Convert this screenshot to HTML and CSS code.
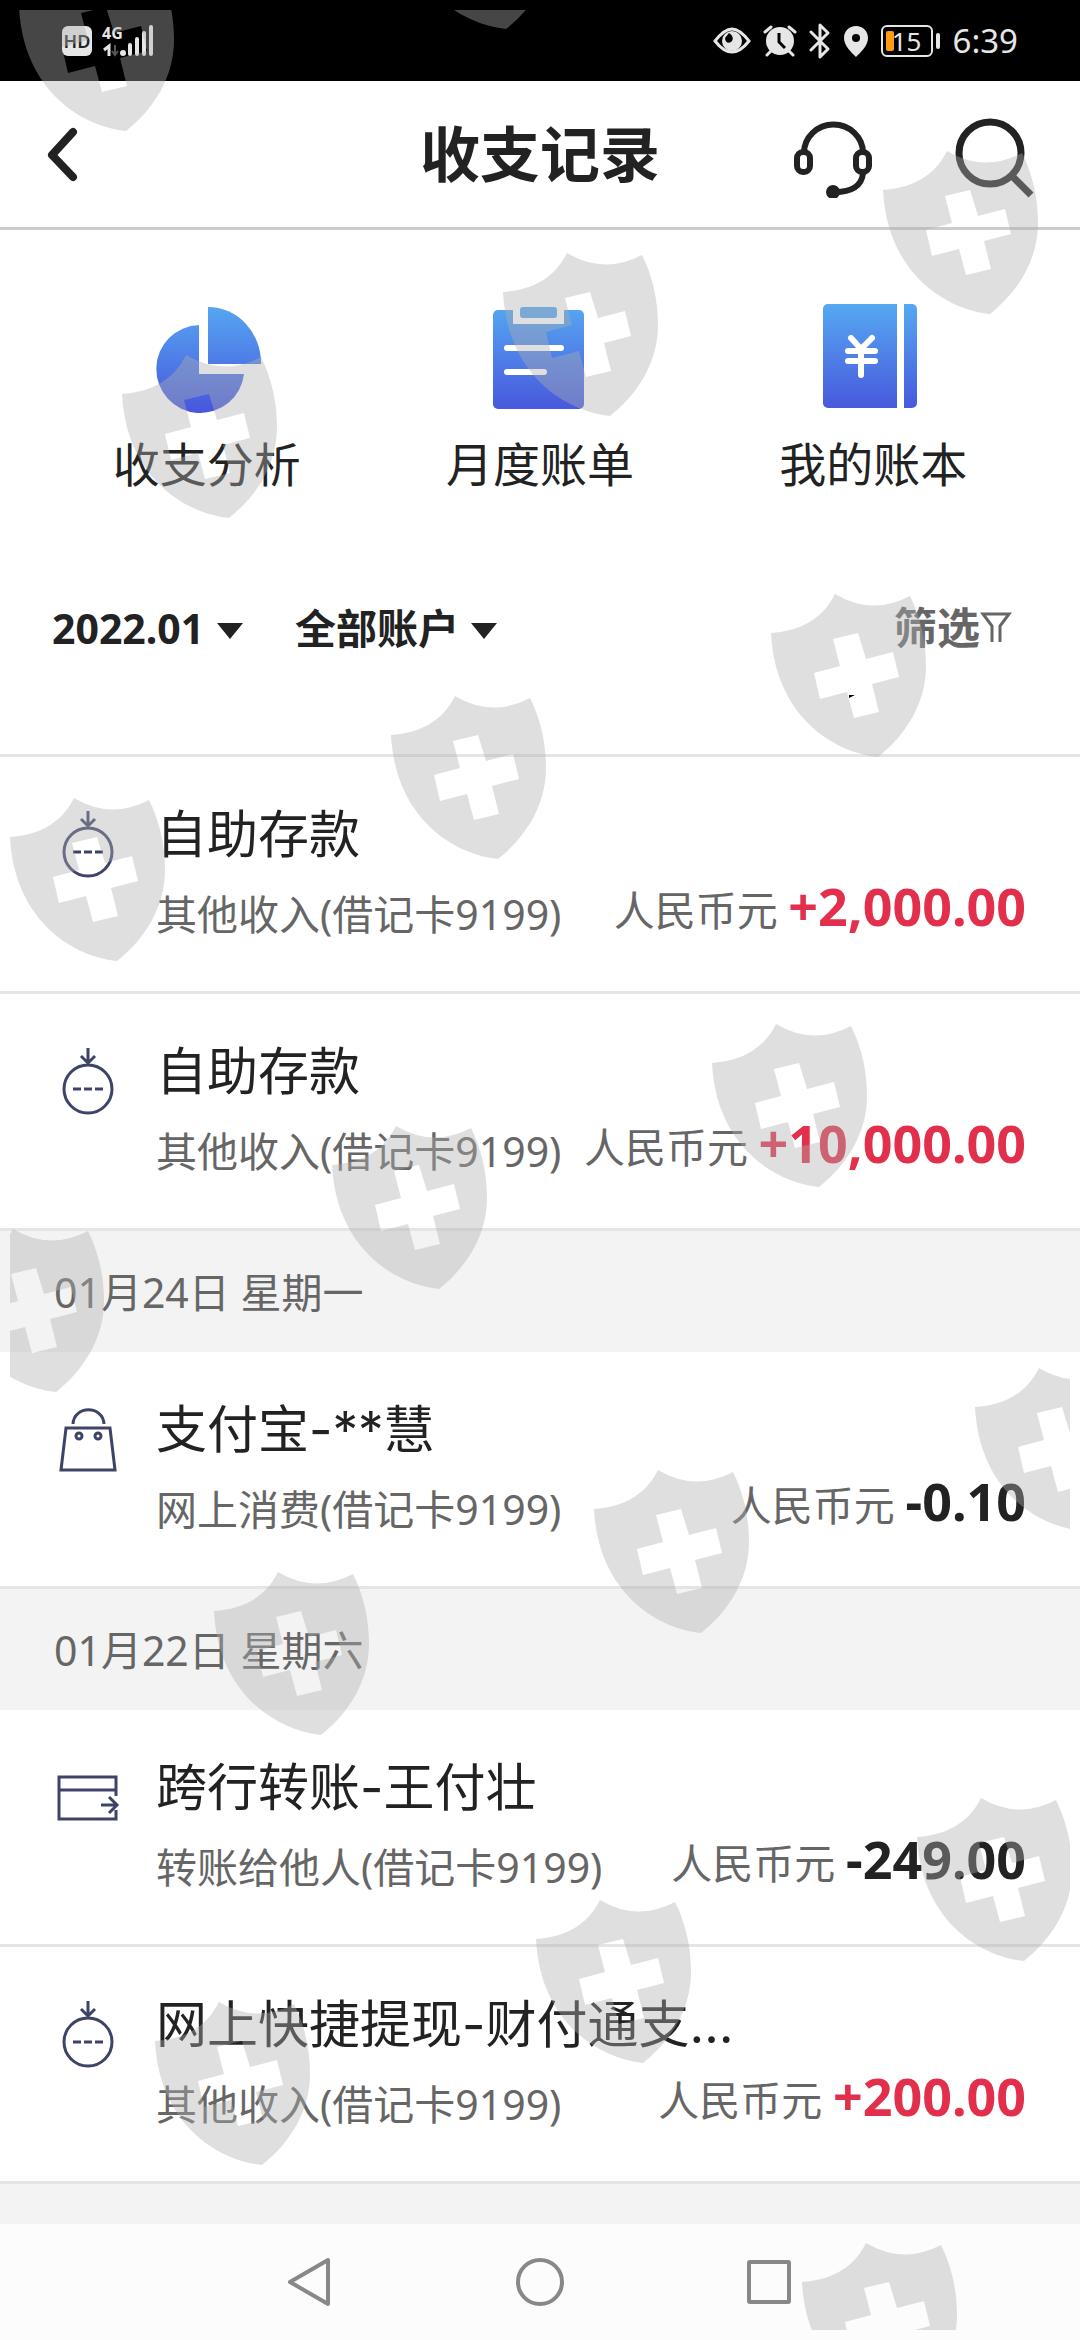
FILE: index.html
```html
<!DOCTYPE html>
<html lang="zh-CN">
<head>
  <meta charset="UTF-8">
  <meta name="viewport" content="width=device-width, initial-scale=1.0">
  <title>收支记录</title>
  <link rel="stylesheet" href="styles.css">
</head>
<body>

<div class="status-bar">
  <div class="status-group">
    <span class="hd-badge">HD</span>
    <span class="network">4G</span>
    <svg class="signal" width="50" height="32" viewBox="0 0 50 32">
      <path d="M1 25l5-4v10" fill="none" stroke="#e6e6e6" stroke-width="3"/>
      <path d="M12 20v10M9 26l3 4 3-4" fill="none" stroke="#555" stroke-width="2"/>
      <circle cx="20" cy="28" r="3" fill="#e6e6e6"/>
      <path d="M27 20v9M34 14v15M41 8v21M48 2v27" stroke="#e6e6e6" stroke-width="4" stroke-linecap="round"/>
    </svg>
  </div>
  <div class="status-group status-right">
    <svg width="38" height="34" viewBox="0 0 38 34">
      <path d="M2 17C9 8 14 5 19 5s10 3 17 12C29 26 24 28 19 28S9 26 2 17z" fill="none" stroke="#e6e6e6" stroke-width="3"/>
      <circle cx="19" cy="17" r="10" fill="#e6e6e6"/>
      <path d="M16 9c4 2 5 7 2 9-3 2-6 0-6-4z" fill="#000"/>
    </svg>
    <svg width="34" height="34" viewBox="0 0 34 34">
      <circle cx="17" cy="17" r="14" fill="#e6e6e6"/>
      <path d="M2 8l6-5M32 8l-6-5M4 31l4-4M30 31l-4-4" stroke="#e6e6e6" stroke-width="3" stroke-linecap="round"/>
      <path d="M16 9v9l6 6" fill="none" stroke="#000" stroke-width="3"/>
    </svg>
    <svg width="22" height="36" viewBox="0 0 22 36">
      <path d="M2 9l17 17-8 8V2l8 8L2 27" fill="none" stroke="#e6e6e6" stroke-width="3" stroke-linejoin="round" stroke-linecap="round"/>
    </svg>
    <svg width="26" height="34" viewBox="0 0 26 34">
      <path d="M13 2C6 2 1 7 1 14c0 8 8 15 12 19 4-4 12-11 12-19C25 7 20 2 13 2z" fill="#e6e6e6"/>
      <circle cx="13" cy="14" r="4" fill="#000"/>
    </svg>
    <span class="battery"><span class="battery-level"></span>15</span>
    <span class="clock">6:39</span>
  </div>
</div>

<header class="header">
  <button class="icon-button" aria-label="返回">
    <svg width="32" height="56" viewBox="0 0 32 56">
      <path d="M27 6L6 29l21 22" fill="none" stroke="#222" stroke-width="8" stroke-linecap="round" stroke-linejoin="round"/>
    </svg>
  </button>
  <h1>收支记录</h1>
  <div class="header-actions">
    <button class="icon-button" aria-label="客服">
      <svg width="80" height="88" viewBox="0 0 80 88" fill="none" stroke="#222" stroke-width="6">
        <path d="M10 43A29 28 0 0 1 69 43"/>
        <rect x="3" y="42" width="13" height="20" rx="6"/>
        <rect x="62" y="42" width="13" height="20" rx="6"/>
        <path d="M69 63C68 76 57 82 41 82"/>
        <circle cx="39" cy="82" r="7" fill="#222" stroke="none"/>
      </svg>
    </button>
    <button class="icon-button" aria-label="搜索">
      <svg width="80" height="88" viewBox="0 0 80 88" fill="none" stroke="#222" stroke-width="7">
        <circle cx="36" cy="43" r="31"/>
        <path d="M59 67l18 18"/>
      </svg>
    </button>
  </div>
</header>

<nav class="shortcuts">
  <a class="shortcut" href="#">
    <svg width="120" height="120" viewBox="0 0 120 120">
      <defs>
        <linearGradient id="blue" x1="0" y1="6" x2="0" y2="114" gradientUnits="userSpaceOnUse">
          <stop offset="0" stop-color="#55a8f2"/>
          <stop offset="1" stop-color="#4856dc"/>
        </linearGradient>
      </defs>
      <path d="M52 27v49h45a44 44 0 1 1-45-49z" fill="url(#blue)"/>
      <path d="M61 9a53 56 0 0 1 53 57H61z" fill="url(#blue)"/>
    </svg>
    <span>收支分析</span>
  </a>
  <a class="shortcut" href="#">
    <svg width="120" height="120" viewBox="0 0 120 120">
      <rect x="13" y="12" width="91" height="99" rx="5" fill="url(#blue)"/>
      <path d="M33 9h51v17H33z" fill="#fff"/>
      <rect x="40" y="9" width="37" height="11" rx="3" fill="#58a6f0"/>
      <path d="M27 50h54M27 74h37" stroke="#fff" stroke-width="6" stroke-linecap="round"/>
    </svg>
    <span>月度账单</span>
  </a>
  <a class="shortcut" href="#">
    <svg width="120" height="120" viewBox="0 0 120 120">
      <path d="M15 6h69v104H15a5 5 0 0 1-5-5V11a5 5 0 0 1 5-5zM91 6h8a5 5 0 0 1 5 5v94a5 5 0 0 1-5 5h-8z" fill="url(#blue)"/>
      <path d="M38 40l10 11 11-11M48 51v26M35 53h27M35 63h27" fill="none" stroke="#fff" stroke-width="6" stroke-linecap="round"/>
    </svg>
    <span>我的账本</span>
  </a>
</nav>

<div class="filters">
  <label class="dropdown">
    <select aria-label="月份"><option>2022.01</option></select>
    <svg class="arrow" width="26" height="16" viewBox="0 0 26 16"><path d="M0 0h26L13 16z" fill="#222"/></svg>
  </label>
  <label class="dropdown">
    <select aria-label="账户"><option>全部账户</option></select>
    <svg class="arrow" width="26" height="16" viewBox="0 0 26 16"><path d="M0 0h26L13 16z" fill="#222"/></svg>
  </label>
  <button class="filter-button">筛选<svg width="32" height="32" viewBox="0 0 32 32"><path d="M12 30V14L3 2h26L20 14v16" fill="none" stroke="#666" stroke-width="3"/></svg></button>
</div>

<main class="list">
  <!-- icons shared by the records -->
  <svg class="symbols" width="0" height="0">
    <symbol id="deposit" viewBox="0 0 68 68">
      <g fill="none" stroke="#3d4468" stroke-width="3">
        <circle cx="34" cy="42" r="24"/>
        <path d="M34 1v15M27 9l7 7 7-7M19 42h8M30 42h8M41 42h8"/>
      </g>
    </symbol>
    <symbol id="bag" viewBox="0 0 68 68">
      <g fill="none" stroke="#3d4468" stroke-width="3">
        <path d="M12 23h44l5 42H7zM19 19c1-19 30-19 31 0"/>
        <circle cx="25" cy="31" r="3"/>
        <circle cx="44" cy="31" r="3"/>
      </g>
    </symbol>
    <symbol id="transfer" viewBox="0 0 68 68">
      <g fill="none" stroke="#3d4468" stroke-width="3">
        <path d="M62 33V14H5v42h57V47M5 27h57M47 42h15M55 34l8 8-8 8"/>
      </g>
    </symbol>
  </svg>

  <div class="record">
    <svg class="record-icon"><use href="#deposit"/></svg>
    <div class="record-body">
      <div class="record-title">自助存款</div>
      <div class="record-meta">
        <span>其他收入(借记卡9199)</span>
        <span class="money">人民币元 <b class="amount income">+2,000.00</b></span>
      </div>
    </div>
  </div>
  <div class="record">
    <svg class="record-icon"><use href="#deposit"/></svg>
    <div class="record-body">
      <div class="record-title">自助存款</div>
      <div class="record-meta">
        <span>其他收入(借记卡9199)</span>
        <span class="money">人民币元 <b class="amount income">+10,000.00</b></span>
      </div>
    </div>
  </div>

  <h2 class="date">01月24日 星期一</h2>
  <div class="record">
    <svg class="record-icon"><use href="#bag"/></svg>
    <div class="record-body">
      <div class="record-title">支付宝-**慧</div>
      <div class="record-meta">
        <span>网上消费(借记卡9199)</span>
        <span class="money">人民币元 <b class="amount">-0.10</b></span>
      </div>
    </div>
  </div>

  <h2 class="date">01月22日 星期六</h2>
  <div class="record">
    <svg class="record-icon"><use href="#transfer"/></svg>
    <div class="record-body">
      <div class="record-title">跨行转账-王付壮</div>
      <div class="record-meta">
        <span>转账给他人(借记卡9199)</span>
        <span class="money">人民币元 <b class="amount">-249.00</b></span>
      </div>
    </div>
  </div>
  <div class="record">
    <svg class="record-icon"><use href="#deposit"/></svg>
    <div class="record-body">
      <div class="record-title">网上快捷提现-财付通支…</div>
      <div class="record-meta">
        <span>其他收入(借记卡9199)</span>
        <span class="money">人民币元 <b class="amount income">+200.00</b></span>
      </div>
    </div>
  </div>
</main>

<div class="nav-bar">
  <button class="icon-button" aria-label="后退">
    <svg width="50" height="50" viewBox="0 0 50 50"><path d="M43 3v44L5 25z" fill="none" stroke="#888" stroke-width="4" stroke-linejoin="round"/></svg>
  </button>
  <button class="icon-button" aria-label="主页">
    <svg width="50" height="50" viewBox="0 0 50 50"><circle cx="25" cy="25" r="22" fill="none" stroke="#888" stroke-width="4"/></svg>
  </button>
  <button class="icon-button" aria-label="最近任务">
    <svg width="50" height="50" viewBox="0 0 50 50"><rect x="4" y="5" width="40" height="40" rx="1" fill="none" stroke="#888" stroke-width="4"/></svg>
  </button>
</div>

<!-- shield watermark over the whole screen -->
<svg class="watermark" viewBox="0 0 1080 2340">
  <defs>
    <path id="shield" fill-rule="evenodd" d="M0 39C26 37 50 28 64 0Q101 22 139 2C150 24 155 48 155 72C155 108 136 140 107 163C60 158 4 120 0 39zM62 45L69 72 43 79 49 105 76 98 83 124 108 118 101 90 128 83 122 58 95 65 87 39z"/>
    <clipPath id="inset"><rect x="10" y="10" width="1060" height="2320"/></clipPath>
  </defs>
  <path d="M849 695h6l-6 3z" fill="#000"/>
  <g clip-path="url(#inset)" fill="#afafaf" fill-opacity="0.4">
    <use href="#shield" x="19" y="-32"/>
    <use href="#shield" x="399" y="-134"/>
    <use href="#shield" x="883" y="151"/>
    <use href="#shield" x="503" y="253"/>
    <use href="#shield" x="122" y="355"/>
    <use href="#shield" x="771" y="594"/>
    <use href="#shield" x="391" y="696"/>
    <use href="#shield" x="10" y="798"/>
    <use href="#shield" x="712" y="1024"/>
    <use href="#shield" x="332" y="1126"/>
    <use href="#shield" x="-51" y="1229"/>
    <use href="#shield" x="975" y="1368"/>
    <use href="#shield" x="594" y="1470"/>
    <use href="#shield" x="214" y="1572"/>
    <use href="#shield" x="917" y="1798"/>
    <use href="#shield" x="536" y="1900"/>
    <use href="#shield" x="155" y="2002"/>
    <use href="#shield" x="802" y="2243"/>
  </g>
</svg>

</body>
</html>
```
FILE: styles.css
```css
* {
  box-sizing: border-box;
}

body {
  margin: 0;
  position: relative;
  display: flex;
  flex-direction: column;
  min-height: 100vh;
  font-family: "Noto Sans", "Noto Sans CJK SC", sans-serif;
  color: #222;
  background: #fff;
}

svg {
  display: block;
  flex: none;
}

button, select {
  margin: 0;
  padding: 0;
  border: none;
  background: none;
  font: inherit;
  color: inherit;
}

/* Status bar */
.status-bar {
  display: flex;
  justify-content: space-between;
  align-items: center;
  height: 81px;
  padding: 0 62px;
  background: #000;
  color: #e6e6e6;
}

.status-group {
  display: flex;
  align-items: center;
}

.status-right {
  gap: 12px;
}

.hd-badge {
  width: 30px;
  border-radius: 6px;
  background: #e6e6e6;
  color: #222;
  font-size: 18px;
  font-weight: 600;
  line-height: 30px;
  text-align: center;
}

.network {
  align-self: flex-start;
  margin-left: 10px;
  font-size: 16px;
  font-weight: 700;
  line-height: 16px;
}

.signal {
  margin-left: -20px;
}

.battery {
  position: relative;
  width: 52px;
  border: 2px solid #e6e6e6;
  border-radius: 6px;
  font-size: 26px;
  line-height: 28px;
  text-align: center;
}

.battery::after {
  content: "";
  position: absolute;
  top: 6px;
  right: -9px;
  width: 4px;
  height: 16px;
  border-radius: 2px;
  background: #e6e6e6;
}

.battery-level {
  position: absolute;
  top: 4px;
  left: 3px;
  width: 8px;
  height: 20px;
  border-radius: 2px;
  background: #ff9a12;
}

.clock {
  margin-left: 8px;
  font-size: 33px;
}

/* Header */
.header {
  display: grid;
  grid-template-columns: 1fr auto 1fr;
  align-items: center;
  height: 149px;
  padding: 0 46px;
  border-bottom: 3px solid #ccc;
}

.header h1 {
  margin: 0;
  font-size: 60px;
  font-weight: 700;
  line-height: 80px;
}

.header-actions {
  display: flex;
  justify-content: flex-end;
  gap: 80px;
}

/* Shortcuts */
.shortcuts {
  display: grid;
  grid-template-columns: repeat(3, 1fr);
  padding: 68px 40px 106px;
}

.shortcut {
  display: flex;
  flex-direction: column;
  align-items: center;
  gap: 18px;
  color: inherit;
  font-size: 47px;
  line-height: 56px;
  text-decoration: none;
}

/* Filters */
.filters {
  display: flex;
  align-items: center;
  gap: 52px;
  padding: 0 68px 96px 52px;
  border-bottom: 3px solid #e5e5e5;
  font-size: 41px;
  font-weight: 700;
  line-height: 60px;
}

.dropdown {
  display: flex;
  align-items: center;
  gap: 12px;
}

.dropdown select {
  appearance: none;
}

.arrow {
  margin-top: 6px;
}

.filter-button {
  display: flex;
  align-items: center;
  margin-left: auto;
  color: #666;
  font-size: 43px;
}

/* Records */
.list {
  flex: 1;
  background: #f3f3f3;
}

.symbols {
  position: absolute;
}

.record {
  display: flex;
  gap: 34px;
  padding: 52px 54px;
  border-bottom: 3px solid #e5e5e5;
  background: #fff;
}

.record-icon {
  width: 68px;
  height: 68px;
  margin-top: 1px;
}

.record-body {
  flex: 1;
  min-width: 0;
}

.record-title {
  margin-bottom: 28px;
  font-family: Inter, "Noto Sans CJK SC", sans-serif;
  font-size: 51px;
  line-height: 52px;
  white-space: nowrap;
}

.record-meta {
  display: flex;
  justify-content: space-between;
  align-items: flex-start;
  height: 50px;
  color: #666;
  font-size: 41px;
  line-height: 50px;
  white-space: nowrap;
}

.money {
  line-height: 34px;
}

.amount {
  color: #222;
  font-size: 52px;
}

.income {
  color: #e2304c;
}

.date {
  margin: 0;
  padding: 31px 54px 30px;
  color: #666;
  font-size: 41px;
  font-weight: 400;
  line-height: 60px;
}

/* System navigation */
.nav-bar {
  display: flex;
  justify-content: center;
  align-items: center;
  gap: 180px;
  height: 116px;
  background: #fcfcfc;
}

/* Watermark */
.watermark {
  position: absolute;
  top: 0;
  left: 0;
  width: 100%;
  pointer-events: none;
}
```
